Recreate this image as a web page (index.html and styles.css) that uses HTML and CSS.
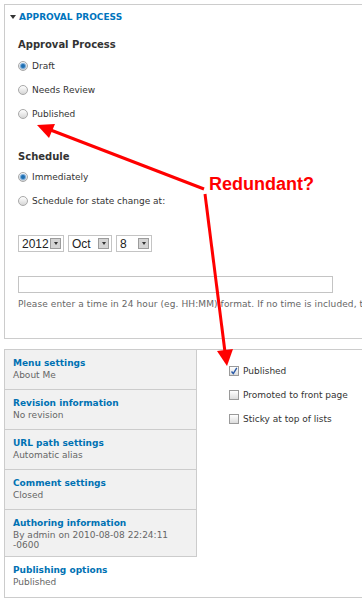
FILE: index.html
```html
<!DOCTYPE html>
<html>
<head>
    <title>Approval process</title>
    <link rel="stylesheet" href="styles.css">
</head>
<body>
    <div class="page">
        <div class="approval">
            <div class="approval-legend"><span class="caret"></span>APPROVAL PROCESS</div>

            <h3 class="group-title">Approval Process</h3>
            <div class="option"><span class="radio checked"></span>Draft</div>
            <div class="option"><span class="radio"></span>Needs Review</div>
            <div class="option"><span class="radio"></span>Published</div>

            <h3 class="group-title schedule-title">Schedule</h3>
            <div class="option"><span class="radio checked"></span>Immediately</div>
            <div class="option"><span class="radio"></span>Schedule for state change at:</div>

            <div class="date-row">
                <div class="select select-year">2012<span class="select-btn"></span></div>
                <div class="select select-month">Oct<span class="select-btn"></span></div>
                <div class="select select-day">8<span class="select-btn"></span></div>
            </div>

            <div class="time-input"></div>
            <div class="help">Please enter a time in 24 hour (eg. HH:MM) format. If no time is included, the default will be midnight.</div>
        </div>

        <div class="vtabs">
            <ul class="vtabs-nav">
                <li class="vtab"><a class="vtab-title">Menu settings</a><div class="vtab-summary">About Me</div></li>
                <li class="vtab"><a class="vtab-title">Revision information</a><div class="vtab-summary">No revision</div></li>
                <li class="vtab"><a class="vtab-title">URL path settings</a><div class="vtab-summary">Automatic alias</div></li>
                <li class="vtab"><a class="vtab-title">Comment settings</a><div class="vtab-summary">Closed</div></li>
                <li class="vtab"><a class="vtab-title">Authoring information</a><div class="vtab-summary">By admin on 2010-08-08 22:24:11 -0600</div></li>
                <li class="vtab selected"><a class="vtab-title">Publishing options</a><div class="vtab-summary">Published</div></li>
            </ul>
            <div class="vtabs-pane">
                <div class="option"><span class="checkbox checked"><svg width="8" height="8" viewBox="0 0 8 8"><path d="M1.5 4.5 L3.3 6.5 L6.8 0.8" fill="none" stroke="#2a5aa8" stroke-width="1.4"/></svg></span>Published</div>
                <div class="option"><span class="checkbox"></span>Promoted to front page</div>
                <div class="option"><span class="checkbox"></span>Sticky at top of lists</div>
            </div>
        </div>

        <!-- red annotation drawn over the screenshot -->
        <svg class="annotation" width="362" height="600" viewBox="0 0 362 600">
            <line x1="204" y1="185" x2="48" y2="125" stroke="#f00" stroke-width="3"/>
            <polygon points="37,121 55,120 49,134" fill="#f00"/>
            <line x1="205" y1="190" x2="225" y2="348" stroke="#f00" stroke-width="3"/>
            <polygon points="227,362 233,345 217,347" fill="#f00"/>
        </svg>
        <div class="annotation-label">Redundant?</div>
    </div>
</body>
</html>
```

FILE: styles.css
```css
/* Reset */
* {
    margin: 0;
    padding: 0;
    box-sizing: border-box;
}

html, body {
    width: 100%;
    height: 100%;
    overflow: hidden;
    background-color: #ffffff;
    color: #333333;
    font-family: 'DejaVu Sans', sans-serif;
    font-size: 9px;
}

.page {
    position: relative;
    height: 100%;
}

/* Approval fieldset */
.approval {
    margin: 4px -30px 0 4px;
    padding: 0 0 28px 13px;
    border: 1px solid #cccccc;
    background: #ffffff;
}

.approval-legend {
    padding: 6px 0 0 0;
    line-height: 12px;
    font-weight: bold;
    color: #0074bd;
    display: flex;
    align-items: center;
}

.caret {
    width: 0;
    height: 0;
    border-left: 3px solid transparent;
    border-right: 3px solid transparent;
    border-top: 4px solid #333333;
    margin: 0 3px 0 -8px;
}

.group-title {
    font-size: 10px;
    line-height: 14px;
    margin-top: 15px;
    margin-bottom: 7px;
    color: #333333;
}

.schedule-title {
    margin-top: 29px;
    margin-bottom: 6px;
}

.option {
    display: flex;
    align-items: center;
    line-height: 14px;
    margin-bottom: 10px;
    white-space: nowrap;
}

.radio {
    width: 10px;
    height: 10px;
    border-radius: 50%;
    border: 1px solid #a8a8a8;
    background: linear-gradient(#ffffff, #d6d6d6);
    margin-right: 4px;
    display: flex;
    align-items: center;
    justify-content: center;
}

.radio.checked::after {
    content: "";
    width: 4px;
    height: 4px;
    border-radius: 50%;
    background: #1f6fb2;
    box-shadow: 0 0 1px 1px #6aa2d6;
}

.checkbox {
    width: 10px;
    height: 10px;
    border: 1px solid #9a9a9a;
    background: linear-gradient(#ffffff, #dcdcdc);
    margin-right: 4px;
    display: flex;
    align-items: center;
    justify-content: center;
}

/* Date selects */
.date-row {
    display: flex;
    gap: 4px;
    margin-top: 27px;
}

.select {
    height: 17px;
    border: 1px solid #c4c4c4;
    background: #ffffff;
    display: flex;
    align-items: center;
    justify-content: space-between;
    padding: 0 2px 0 3px;
    font-family: 'Liberation Sans', sans-serif;
    font-size: 12px;
    color: #222222;
}

.select-year { width: 46px; }
.select-month { width: 44px; }
.select-day { width: 36px; }

.select-btn {
    width: 11px;
    height: 11px;
    border: 1px solid #9c9c9c;
    background: #d4d4d4;
    display: flex;
    align-items: center;
    justify-content: center;
}

.select-btn::after {
    content: "";
    border-left: 2px solid transparent;
    border-right: 2px solid transparent;
    border-top: 3px solid #333333;
}

.time-input {
    width: 315px;
    height: 17px;
    margin-top: 24px;
    border: 1px solid #c4c4c4;
    background: #ffffff;
}

.help {
    margin-top: 5px;
    line-height: 12px;
    color: #666666;
    white-space: nowrap;
    letter-spacing: 0.1px;
}

/* Vertical tabs */
.vtabs {
    display: flex;
    margin: 10px -30px 0 4px;
    border: 1px solid #cccccc;
    border-right: none;
}

.vtabs-nav {
    list-style: none;
    width: 192px;
    flex-shrink: 0;
    background: #f1f1f1;
}

.vtab {
    min-height: 40px;
    padding: 7px 8px 6px 8px;
    border-bottom: 1px solid #cccccc;
    border-right: 1px solid #cccccc;
}

.vtab.selected {
    background: #ffffff;
    border-right-color: #ffffff;
    border-bottom: none;
}

.vtab-title {
    display: block;
    font-weight: bold;
    line-height: 13px;
    color: #0071b3;
}

.vtab-summary {
    line-height: 10px;
    color: #666666;
}

.vtabs-pane {
    flex: 1;
    padding: 14px 0 0 32px;
    background: #ffffff;
}

/* Annotation overlay */
.annotation {
    position: absolute;
    top: 0;
    left: 0;
    pointer-events: none;
}

.annotation-label {
    position: absolute;
    left: 209px;
    top: 171px;
    font-family: 'Liberation Sans', sans-serif;
    font-weight: bold;
    font-size: 18px;
    line-height: 18px;
    color: #ff0000;
}
```
